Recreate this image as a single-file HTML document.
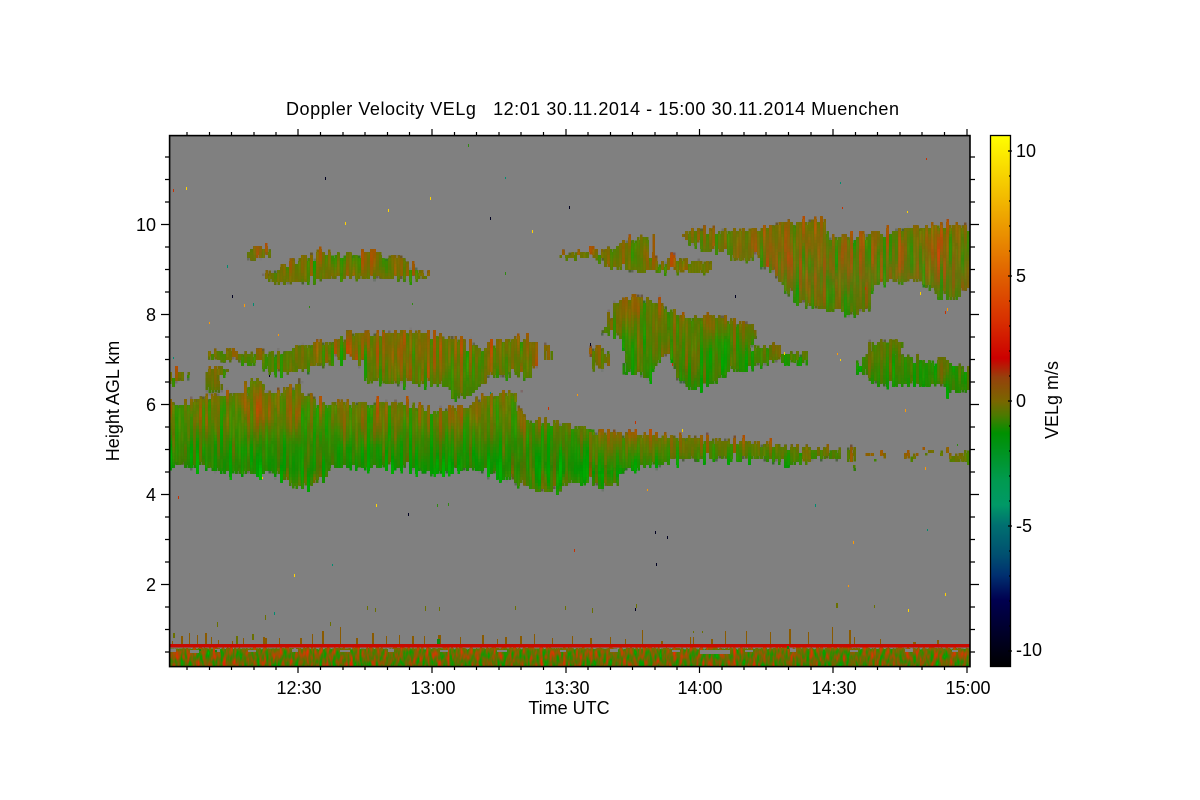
<!DOCTYPE html>
<html lang="en">
<head>
<meta charset="utf-8">
<title>Doppler Velocity VELg</title>
<style>
html,body{margin:0;padding:0;background:#fff}
svg{display:block}
text{font-family:"Liberation Sans",Arial,sans-serif;fill:#000;white-space:pre}
</style>
</head>
<body>
<svg xmlns="http://www.w3.org/2000/svg" width="1200" height="800" viewBox="0 0 1200 800">
<defs>
<linearGradient id="cb" x1="0" y1="0" x2="0" y2="1">
<stop offset="0" stop-color="#ffff00"/>
<stop offset=".122" stop-color="#f2b800"/>
<stop offset=".265" stop-color="#e06000"/>
<stop offset=".348" stop-color="#d83000"/>
<stop offset=".42" stop-color="#cc0000"/>
<stop offset=".455" stop-color="#96400c"/>
<stop offset=".5" stop-color="#7a6600"/>
<stop offset=".528" stop-color="#4a7a00"/>
<stop offset=".56" stop-color="#009000"/>
<stop offset=".65" stop-color="#009a50"/>
<stop offset=".695" stop-color="#009966"/>
<stop offset=".733" stop-color="#007070"/>
<stop offset=".79" stop-color="#004f70"/>
<stop offset=".827" stop-color="#003070"/>
<stop offset=".874" stop-color="#000050"/>
<stop offset=".95" stop-color="#000020"/>
<stop offset="1" stop-color="#000000"/>
</linearGradient>
<linearGradient id="gLow" gradientUnits="userSpaceOnUse" x1="0" y1="392" x2="0" y2="490">
<stop offset="0" stop-color="#6a7400"/>
<stop offset=".3" stop-color="#5c7800"/>
<stop offset=".55" stop-color="#2a8600"/>
<stop offset=".8" stop-color="#128c00"/>
<stop offset="1" stop-color="#4a7c00"/>
</linearGradient>
<linearGradient id="gRight" gradientUnits="userSpaceOnUse" x1="0" y1="432" x2="0" y2="470">
<stop offset="0" stop-color="#7a6c00"/>
<stop offset=".55" stop-color="#4f7a00"/>
<stop offset="1" stop-color="#2a8400"/>
</linearGradient>
<linearGradient id="gMid" gradientUnits="userSpaceOnUse" x1="0" y1="332" x2="0" y2="400">
<stop offset="0" stop-color="#746c00"/>
<stop offset=".6" stop-color="#5f7400"/>
<stop offset="1" stop-color="#3a8000"/>
</linearGradient>
<linearGradient id="gBlob" gradientUnits="userSpaceOnUse" x1="0" y1="297" x2="0" y2="390">
<stop offset="0" stop-color="#687000"/>
<stop offset=".5" stop-color="#4a7c00"/>
<stop offset="1" stop-color="#258600"/>
</linearGradient>
<linearGradient id="gTop" gradientUnits="userSpaceOnUse" x1="0" y1="222" x2="0" y2="316">
<stop offset="0" stop-color="#706e00"/>
<stop offset=".6" stop-color="#66700a"/>
<stop offset="1" stop-color="#4a7a00"/>
</linearGradient>
<linearGradient id="gBot" gradientUnits="userSpaceOnUse" x1="0" y1="648" x2="0" y2="667">
<stop offset="0" stop-color="#746c00"/>
<stop offset="1" stop-color="#5e6c00"/>
</linearGradient>
<filter id="s" filterUnits="userSpaceOnUse" x="170" y="136" width="800" height="531" color-interpolation-filters="sRGB">
<feTurbulence type="fractalNoise" baseFrequency="0.3 0.018" numOctaves="3" seed="4" result="n"/>
<feDisplacementMap in="SourceGraphic" in2="n" scale="20" xChannelSelector="G" yChannelSelector="R" result="d"/>
<feColorMatrix in="n" type="matrix" values="1 0 0 0 0  -.5 0 0 0 .75  0 0 0 0 .5  0 0 0 0 1" result="c"/>
<feComposite in="d" in2="c" operator="arithmetic" k1="0" k2="1" k3="1" k4="-0.5" result="m"/>
<feComposite in="m" in2="d" operator="in" result="v"/>
<feFlood x="170" y="136" width="1" height="1" flood-color="#000" result="dot"/>
<feComposite in="dot" in2="dot" operator="over" x="170" y="136" width="3" height="3" result="cell"/>
<feTile in="cell" x="170" y="136" width="800" height="531" result="grid"/>
<feComposite in="v" in2="grid" operator="in" result="pts"/>
<feMorphology in="pts" operator="dilate" radius="1"/>
</filter>
<filter id="b" filterUnits="userSpaceOnUse" x="170" y="640" width="800" height="27" color-interpolation-filters="sRGB">
<feTurbulence type="fractalNoise" baseFrequency="0.3 0.1" numOctaves="2" seed="9" result="n"/>
<feDisplacementMap in="SourceGraphic" in2="n" scale="6" xChannelSelector="G" yChannelSelector="R" result="d"/>
<feColorMatrix in="n" type="matrix" values="1.6 0 0 0 -.3  -.8 0 0 0 .9  0 0 0 0 .5  0 0 0 0 1" result="c"/>
<feComposite in="d" in2="c" operator="arithmetic" k1="0" k2="1" k3="1" k4="-0.5" result="m"/>
<feComposite in="m" in2="d" operator="in"/>
</filter>
</defs>

<!-- plot background -->
<rect x="169" y="135" width="801" height="532" fill="#808080"/>

<!-- echoes -->
<g filter="url(#s)">
<polygon fill="url(#gLow)" points="150,403 185,402 205,398 220,395 235,393 255,393 280,392 295,385 299,380 302,392 310,396 320,402 345,403 375,402 400,403 412,403 420,408 440,410 470,408 478,400 495,393 510,392 519,395 513,407 520,415 535,420 555,421 570,425 590,428 600,433 620,436 620,468 617,478 612,487 600,488 590,482 570,482 560,490 545,493 530,488 510,480 490,472 470,470 430,472 400,468 330,468 325,478 310,487 290,487 280,478 270,472 250,475 220,472 200,468 150,466"/>
<polygon fill="url(#gRight)" points="590,430 620,434 650,435 700,438 750,442 790,447 810,448 840,450 842,460 810,458 790,464 770,460 730,458 680,460 650,465 625,468 600,470 590,468"/>
<polygon fill="url(#gMid)" points="209,352 225,349 235,353 285,350 300,345 340,340 345,332 360,333 380,334 405,331 430,333 445,337 465,340 480,348 490,345 500,340 525,337 535,345 538,355 535,370 530,378 525,377 515,372 505,378 495,372 485,385 480,385 472,395 455,400 450,388 440,385 420,385 408,383 395,385 385,382 370,382 365,368 360,362 340,359 320,366 290,373 270,372 258,362 220,360 209,358"/>
<polygon fill="url(#gMid)" points="204,372 222,366 224,372 218,380 222,392 210,393 205,380"/>
<polygon fill="url(#gMid)" points="150,373 187,373 185,380 175,385 150,388"/>
<polygon fill="url(#gLow)" points="243,385 255,378 265,385 263,396 245,396"/>
<polygon fill="url(#gMid)" points="545,348 550,346 550,362 547,362"/>
<polygon fill="url(#gTop)" points="248,250 260,248 273,250 273,256 262,258 252,262 248,256"/>
<polygon fill="#6a7000" points="263,277 285,265 315,252 345,252 375,253 410,260 420,272 432,278 410,279 370,278 335,278 305,281 280,284 265,278"/>
<polygon fill="#6f6e00" points="560,254 605,250 622,243 640,236 652,236 652,255 660,262 670,258 710,262 708,272 680,272 660,270 640,272 625,268 605,268 600,258 560,258"/>
<polygon fill="url(#gTop)" points="684,233 695,229 725,230 760,230 780,223 800,222 827,220 827,237 860,235 880,232 900,228 945,225 985,228 985,290 970,290 950,300 945,298 935,290 920,281 905,281 880,281 870,293 866,310 857,316 845,312 820,310 803,303 790,296 783,285 770,270 757,257 745,260 733,260 733,252 703,250 683,238"/>
<polygon fill="url(#gBlob)" points="613,303 637,297 653,300 660,303 670,308 680,318 703,317 717,317 737,323 755,327 757,337 750,347 777,347 783,352 807,353 807,362 777,362 763,365 737,372 727,370 717,383 690,390 677,377 670,357 657,363 647,380 633,370 625,373 630,353 620,337 603,332 610,313"/>
<polygon fill="#746a00" points="588,350 605,345 612,360 604,370 596,368 588,358"/>
<polygon fill="url(#gBlob)" points="870,343 887,342 903,342 900,355 913,357 923,360 947,360 957,365 985,373 985,390 953,393 937,385 880,385 867,380 858,363 868,355"/>
<polygon fill="#527800" points="848,448 857,450 857,467 848,465"/>
<path fill="#6a7000" d="M870 455h6v4h-6zM882 455h4v4h-4zM902 455h6v5h-6zM915 455h4v4h-4zM925 450h8v3h-8zM940 450h6v5h-6zM950 455h35v6h-35zM962 449h20v6h-20zM800 450h8v12h-8z"/>
</g>

<!-- near-ground clutter -->
<g filter="url(#b)">
<rect x="160" y="648" width="820" height="25" fill="url(#gBot)"/>
</g>
<path fill="#808080" d="M170 649h6v3h-6zM190 650h9v3h-9zM215 649h5v3h-5zM248 650h8v2h-8zM292 649h6v3h-6zM340 650h10v2h-10zM388 649h6v3h-6zM440 650h8v2h-8zM497 650h10v2h-10zM560 650h6v2h-6zM610 649h8v3h-8zM672 650h8v2h-8zM700 650h30v4h-30zM745 650h8v2h-8zM790 649h6v3h-6zM850 650h8v2h-8zM905 649h8v3h-8zM952 650h6v2h-6z"/>
<rect x="170" y="644" width="800" height="3.5" fill="#c80a00"/>
<path fill="#8a5a00" d="M172 644h1v-3h-1zM181 644h2v-8h-2zM189 644h1v-11h-1zM197 644h1v-9h-1zM205 644h2v-11h-2zM211 644h1v-7h-1zM218 644h1v-4h-1zM232 644h1v-3h-1zM243 644h1v-6h-1zM263 644h2v-7h-2zM265 644h2v-6h-2zM279 644h1v-6h-1zM300 644h2v-6h-2zM312 644h1v-10h-1zM322 644h2v-13h-2zM340 644h1v-17h-1zM356 644h2v-6h-2zM372 644h2v-11h-2zM386 644h1v-8h-1zM399 644h1v-9h-1zM412 644h2v-8h-2zM424 644h1v-8h-1zM438 644h3v-9h-3zM460 644h1v-7h-1zM482 644h2v-9h-2zM497 644h1v-5h-1zM505 644h2v-7h-2zM520 644h2v-8h-2zM534 644h1v-10h-1zM552 644h1v-6h-1zM572 644h1v-8h-1zM590 644h2v-6h-2zM610 644h1v-7h-1zM642 644h1v-14h-1zM661 644h2v-3h-2zM693 644h1v-7h-1zM711 644h2v-5h-2zM725 644h1v-13h-1zM746 644h1v-13h-1zM770 644h1v-12h-1zM789 644h2v-15h-2zM808 644h1v-12h-1zM832 644h1v-17h-1zM849 644h2v-14h-2zM854 644h1v-7h-1zM913 644h3v-2h-3zM625 644h1v-5h-1zM690 644h1v-7h-1zM880 644h1v-5h-1zM937 644h2v-4h-2z"/>
<path fill="#6a7000" d="M173 633h2v5h-2zM217 622h1v5h-1zM236 636h2v8h-2zM252 634h2v6h-2zM265 615h1v5h-1zM330 622h1v4h-1zM367 606h1v4h-1zM375 608h1v4h-1zM425 606h1v5h-1zM439 607h1v4h-1zM515 606h1v4h-1zM565 606h1v4h-1zM592 608h1v5h-1zM636 604h1v4h-1zM693 631h1v2h-1zM702 631h1v2h-1zM836 603h2v5h-2zM874 605h1v3h-1z"/>
<path fill="#0a8a10" d="M437 639h3v5h-3zM199 649h2v2h-2zM215 650h2v2h-2zM787 646h2v3h-2z"/>

<!-- isolated speckles -->
<path fill="#ffd400" d="M186 187h1v3h-1zM345 222h1v3h-1zM388 209h1v3h-1zM430 197h1v3h-1zM532 230h1v3h-1zM376 504h1v3h-1zM294 574h1v3h-1zM682 429h1v3h-1zM262 477h1v2h-1zM945 593h1v3h-1zM908 609h1v3h-1zM907 211h1v2h-1zM784 352h1v3h-1zM920 292h1v3h-1zM840 359h1v2h-1z"/>
<path fill="#ff9a00" d="M209 322h1v2h-1zM905 409h1v3h-1zM853 541h1v3h-1zM848 585h1v2h-1zM925 467h1v3h-1zM947 308h1v3h-1zM577 394h1v2h-1zM647 489h1v2h-1zM837 353h1v2h-1zM244 304h1v3h-1zM278 334h1v2h-1z"/>
<path fill="#c83000" d="M173 189h1v3h-1zM178 496h1v3h-1zM574 549h1v3h-1zM548 407h1v3h-1zM926 158h1v2h-1zM635 421h1v3h-1zM945 311h1v3h-1zM672 363h1v3h-1zM842 207h1v2h-1zM865 287h1v3h-1z"/>
<path fill="#000020" d="M325 177h1v3h-1zM232 295h1v3h-1zM490 217h1v3h-1zM569 206h1v3h-1zM735 295h1v3h-1zM590 343h1v3h-1zM655 531h1v3h-1zM667 536h1v3h-1zM656 563h1v3h-1zM408 513h1v3h-1zM269 375h1v2h-1zM635 608h1v3h-1z"/>
<path fill="#008c70" d="M227 265h1v3h-1zM253 303h1v3h-1zM815 504h1v3h-1zM927 529h1v2h-1zM332 564h1v2h-1zM274 612h1v3h-1zM173 357h1v2h-1zM490 392h1v2h-1zM505 177h1v2h-1zM840 182h1v2h-1z"/>
<path fill="#2f8a10" d="M468 144h1v3h-1zM412 303h1v2h-1zM309 306h1v2h-1zM437 504h1v3h-1zM448 503h1v3h-1zM505 272h1v3h-1zM383 330h1v2h-1zM957 444h1v2h-1z"/>

<!-- plot frame and ticks -->
<rect x="169.6" y="135.6" width="800.4" height="531" fill="none" stroke="#000" stroke-width="1.6"/>
<path fill="none" stroke="#000" stroke-width="1.2" d="M161 224.5h8M161 314.5h8M161 404.5h8M161 494.5h8M161 584.5h8M165 157h4M165 179.5h4M165 202h4M165 247h4M165 269.5h4M165 292h4M165 337h4M165 359.5h4M165 382h4M165 427h4M165 449.5h4M165 472h4M165 517h4M165 539.5h4M165 562h4M165 607h4M165 629.5h4M165 652h4M970 224.5h9M970 314.5h9M970 404.5h9M970 494.5h9M970 584.5h9M970 157h5M970 179.5h5M970 202h5M970 247h5M970 269.5h5M970 292h5M970 337h5M970 359.5h5M970 382h5M970 427h5M970 449.5h5M970 472h5M970 517h5M970 539.5h5M970 562h5M970 607h5M970 629.5h5M970 652h5M298 135v-6M432 135v-6M566 135v-6M699.500 135v-6M833 135v-6M967 135v-6M187 135v-3M209.500 135v-3M231.500 135v-3M254 135v-3M276 135v-3M320.500 135v-3M343 135v-3M365 135v-3M387.500 135v-3M409.500 135v-3M454.500 135v-3M476.500 135v-3M499 135v-3M521 135v-3M543.500 135v-3M588 135v-3M610.500 135v-3M632.500 135v-3M655 135v-3M677 135v-3M722 135v-3M744 135v-3M766 135v-3M788.500 135v-3M811 135v-3M855.500 135v-3M877.500 135v-3M900 135v-3M922 135v-3M944.500 135v-3M298 667v6M432 667v6M566 667v6M699.500 667v6M833 667v6M967 667v6M187 667v3M209.500 667v3M231.500 667v3M254 667v3M276 667v3M320.500 667v3M343 667v3M365 667v3M387.500 667v3M409.500 667v3M454.500 667v3M476.500 667v3M499 667v3M521 667v3M543.500 667v3M588 667v3M610.500 667v3M632.500 667v3M655 667v3M677 667v3M722 667v3M744 667v3M766 667v3M788.500 667v3M811 667v3M855.500 667v3M877.500 667v3M900 667v3M922 667v3M944.500 667v3"/>

<!-- colour bar -->
<rect x="990" y="135" width="20.500" height="532" fill="url(#cb)"/>
<rect x="990.500" y="135.500" width="20" height="531" fill="none" stroke="#000" stroke-width="1.300"/>
<path fill="none" stroke="#000" stroke-width="1.200" d="M1008 151h4M1008 276h4M1008 401h4M1008 526h4M1008 651h4M1009 176h2M1009 201h2M1009 226h2M1009 251h2M1009 301h2M1009 326h2M1009 351h2M1009 376h2M1009 426h2M1009 451h2M1009 476h2M1009 501h2M1009 551h2M1009 576h2M1009 601h2M1009 626h2"/>

<!-- text -->
<text x="286" y="115" font-size="18" textLength="613" lengthAdjust="spacing">Doppler Velocity VELg   12:01 30.11.2014 - 15:00 30.11.2014 Muenchen</text>
<g font-size="18" text-anchor="end">
<text x="156" y="231">10</text>
<text x="156" y="321">8</text>
<text x="156" y="411">6</text>
<text x="156" y="501">4</text>
<text x="156" y="591">2</text>
</g>
<g font-size="18" text-anchor="middle">
<text x="299" y="694">12:30</text>
<text x="433" y="694">13:00</text>
<text x="567" y="694">13:30</text>
<text x="700" y="694">14:00</text>
<text x="834" y="694">14:30</text>
<text x="968" y="694">15:00</text>
<text x="569" y="714">Time UTC</text>
<text transform="translate(119 401) rotate(-90)">Height AGL km</text>
<text transform="translate(1058 400) rotate(-90)">VELg m/s</text>
</g>
<g font-size="18">
<text x="1016" y="157">10</text>
<text x="1016" y="282">5</text>
<text x="1016" y="407">0</text>
<text x="1016" y="532">-5</text>
<text x="1016" y="656">-10</text>
</g>
</svg>
</body>
</html>
